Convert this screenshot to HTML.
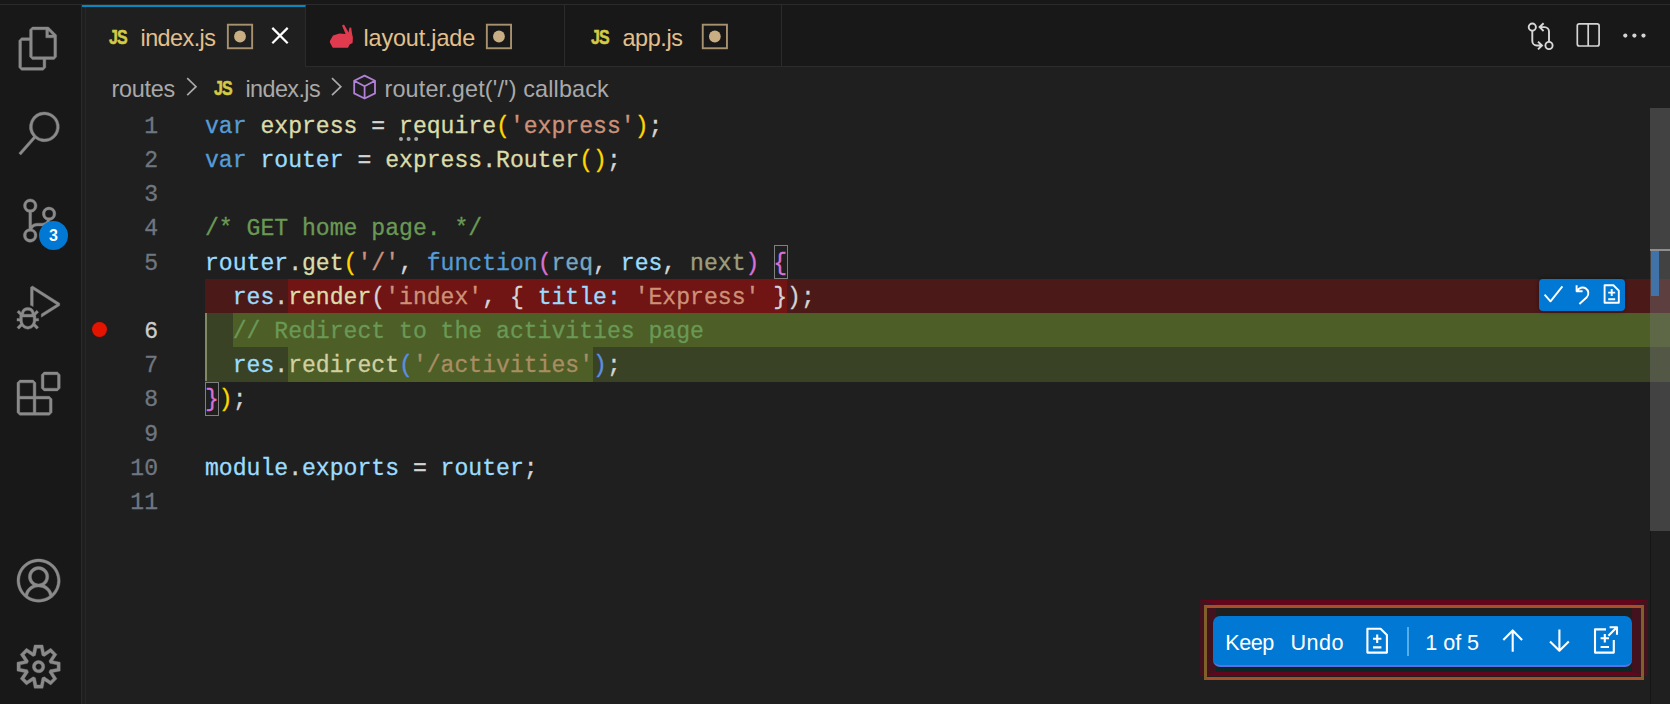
<!DOCTYPE html>
<html lang="en">
<head>
<meta charset="utf-8">
<title>index.js - Visual Studio Code</title>
<style>
*{box-sizing:border-box;margin:0;padding:0}
html,body{width:1670px;height:704px;overflow:hidden;background:#1f1f1f}
body{position:relative;font-family:"Liberation Sans",sans-serif;color:#ccc}
.abs{position:absolute}
#activity{left:0;top:0;width:82px;height:704px;background:#181818;border-right:1px solid #2b2b2b}
#activity svg{position:absolute;overflow:visible}
#topstrip{left:0;top:0;width:1670px;height:5px;background:#181818;border-bottom:1px solid #2b2b2b}
#tabs{left:82px;top:5px;width:1588px;height:62px;background:#181818;border-bottom:1px solid #2b2b2b}
.tab{position:absolute;top:0;height:62px;border-right:1px solid #2b2b2b;border-bottom:1px solid #2b2b2b}
.tab.active{background:#1f1f1f;border-top:2px solid #0888bf;border-bottom:none}
.tablabel{position:absolute;font-size:23.4px;line-height:28px;color:#e2c08d;white-space:nowrap}
.jsicon{position:absolute;font-size:19.5px;line-height:20px;font-weight:bold;color:#d2cb45;letter-spacing:-1px;transform-origin:0 0;transform:scaleX(.82);-webkit-text-stroke:.5px #d2cb45}
#crumbs{left:82px;top:67px;width:1588px;height:41px;background:#1f1f1f;font-size:23.4px;color:#a9a9a9}
.crumb{position:absolute;top:75px;font-size:23.4px;line-height:28px;white-space:nowrap;color:#a9a9a9}
#editor{left:82px;top:108px;width:1588px;height:596px;background:#1f1f1f;font-family:"Liberation Mono",monospace;font-size:23.1px}
.ln{-webkit-text-stroke:.3px;margin-top:1.8px;position:absolute;left:0;width:76px;text-align:right;color:#6e7681;height:34.2px;line-height:34.2px}
.cl{-webkit-text-stroke:.3px;margin-top:1.8px;position:absolute;left:123px;height:34.2px;line-height:34.2px;white-space:pre;color:#d4d4d4}
.bg{position:absolute}
.k{color:#569cd6}.v{color:#9cdcfe}.f{color:#dcdcaa}.s{color:#ce9178}.c{color:#6a9955}
.b1{color:#ffd700}.b2{color:#da70d6}.b3{color:#179fff}.dimv{color:#9cdcfe;opacity:.72}.dimf{color:#dcdcaa;opacity:.67}
.box{position:absolute;border:1px solid #808080;width:14.4px;height:34.2px}
.bt{position:absolute;top:629.2px;font-size:21.6px;line-height:28px;color:#fff;white-space:nowrap}
#scroll{left:1650px;top:108px;width:20px;height:423px;background:rgba(121,121,121,.4)}
</style>
</head>
<body>
<div id="activity" class="abs">
  <svg style="left:17.4px;top:26.7px" width="43.2" height="43.2" viewBox="0 0 24 24" fill="#8a8a8a" stroke="#8a8a8a" stroke-width=".22"><path d="M17.5 0h-9L7 1.5V6H2.5L1 7.5v15.07L2.5 24h12.07L16 22.57V18h4.7l1.3-1.43V4.5L17.5 0zm0 2.12l2.38 2.38H17.5V2.12zm-3 20.38h-12v-15H7v9.07L8.5 18h6v4.5zm6-6h-12v-15H16V6h4.5v10.5z"/></svg>
  <svg style="left:17.4px;top:112.4px" width="43.2" height="43.2" viewBox="0 0 24 24" fill="#8a8a8a" stroke="#8a8a8a" stroke-width=".22"><path d="M15.25 0a8.25 8.25 0 0 0-6.18 13.72L1 22.88l1.12 1 8.05-9.12A8.251 8.251 0 1 0 15.25.01V0zm0 15a6.75 6.75 0 1 1 0-13.5 6.75 6.75 0 0 1 0 13.5z"/></svg>
  <svg style="left:18px;top:198.8px" width="43.2" height="43.2" viewBox="0 0 24 24" fill="#8a8a8a" stroke="#8a8a8a" stroke-width=".22"><path d="M21.007 8.222A3.738 3.738 0 0 0 15.045 5.2a3.737 3.737 0 0 0 1.156 6.583 2.988 2.988 0 0 1-2.668 1.67h-2.99a4.456 4.456 0 0 0-2.989 1.165V7.4a3.737 3.737 0 1 0-1.494 0v9.117a3.776 3.776 0 1 0 1.816.099 2.99 2.99 0 0 1 2.668-1.667h2.99a4.484 4.484 0 0 0 4.223-3.039 3.736 3.736 0 0 0 3.25-3.687zM4.565 3.738a2.242 2.242 0 1 1 4.484 0 2.242 2.242 0 0 1-4.484 0zm4.484 16.441a2.242 2.242 0 1 1-4.484 0 2.242 2.242 0 0 1 4.484 0zm8.221-9.715a2.242 2.242 0 1 1 0-4.485 2.242 2.242 0 0 1 0 4.485z"/></svg>
  <div class="abs" style="left:39px;top:221px;width:29px;height:29px;border-radius:50%;background:#0078d4;color:#fff;font-size:16px;font-weight:bold;text-align:center;line-height:29px">3</div>
  <svg style="left:17.4px;top:286px" width="43.2" height="43.2" viewBox="0 0 24 24" fill="#8a8a8a" stroke="#8a8a8a" stroke-width=".22"><path d="M10.94 13.5l-1.32 1.32a3.73 3.73 0 0 0-7.24 0L1.06 13.5 0 14.56l1.72 1.72-.22.22V18H0v1.5h1.5v.08c.077.489.214.966.41 1.42L0 22.94 1.06 24l1.65-1.65A4.308 4.308 0 0 0 6 24a4.31 4.31 0 0 0 3.29-1.65L10.94 24 12 22.94 10.09 21c.198-.464.336-.951.41-1.45v-.1H12V18h-1.5v-1.5l-.22-.22L12 14.56l-1.06-1.06zM6 13.5a2.25 2.25 0 0 1 2.25 2.25h-4.5A2.25 2.25 0 0 1 6 13.5zm3 6a3.33 3.33 0 0 1-3 3 3.33 3.33 0 0 1-3-3v-2.25h6v2.25zm14.76-9.9v1.26L13.5 17.37V15.6l8.5-5.37L9 2v9.46a5.07 5.07 0 0 0-1.5-.72V.63L8.64 0l15.12 9.6z"/></svg>
  <svg style="left:17.4px;top:372px" width="43.2" height="43.2" viewBox="0 0 24 24" fill="#8a8a8a" stroke="#8a8a8a" stroke-width=".22"><path d="M13.5 1.5L15 0h7.5L24 1.5V9l-1.5 1.5H15L13.5 9V1.5zm1.5 0V9h7.5V1.5H15zM0 15V6l1.5-1.5H9L10.5 6v7.5H18l1.5 1.5v7.5L18 24H1.5L0 22.5V15zm9-1.5V6H1.5v7.5H9zM9 15H1.5v7.5H9V15zm1.5 7.5H18V15h-7.5v7.5z"/></svg>
  <svg style="left:17.4px;top:558.6px" width="43.2" height="43.2" viewBox="0 0 16 16" fill="#8a8a8a" stroke="#8a8a8a" stroke-width=".15"><path d="M16 7.992C16 3.58 12.416 0 8 0S0 3.58 0 7.992c0 2.43 1.104 4.62 2.832 6.09.016.016.032.016.032.032.144.112.288.224.448.336.08.048.144.111.224.175A7.98 7.98 0 0 0 8.016 16a7.98 7.98 0 0 0 4.48-1.375c.08-.048.144-.111.224-.16.144-.111.304-.223.448-.335.016-.016.032-.016.032-.032 1.696-1.487 2.8-3.676 2.8-6.106zm-8 7.001c-1.504 0-2.88-.48-4.016-1.279.016-.128.048-.255.08-.383a4.17 4.17 0 0 1 .416-.991c.176-.304.384-.576.64-.816.24-.24.528-.463.816-.639.304-.176.624-.304.976-.4A4.15 4.15 0 0 1 8 10.342a4.185 4.185 0 0 1 2.928 1.166c.368.368.656.8.864 1.295.112.288.192.592.24.911A7.03 7.03 0 0 1 8 14.993zm-2.448-7.4a2.49 2.49 0 0 1-.208-1.024c0-.351.064-.703.208-1.023.144-.32.336-.607.576-.847.24-.24.528-.431.848-.575.32-.144.672-.208 1.024-.208.368 0 .704.064 1.024.208.32.144.608.336.848.575.24.24.432.528.576.847.144.32.208.672.208 1.023 0 .368-.064.704-.208 1.023a2.84 2.84 0 0 1-.576.848 2.84 2.84 0 0 1-.848.575 2.715 2.715 0 0 1-2.064 0 2.84 2.84 0 0 1-.848-.575 2.526 2.526 0 0 1-.56-.848zm7.424 5.306c0-.032-.016-.048-.016-.08a5.22 5.22 0 0 0-.688-1.406 4.883 4.883 0 0 0-1.088-1.135 5.207 5.207 0 0 0-1.04-.608 2.82 2.82 0 0 0 .464-.383 4.2 4.2 0 0 0 .624-.784 3.624 3.624 0 0 0 .528-1.934 3.71 3.71 0 0 0-.288-1.47 3.799 3.799 0 0 0-.816-1.199 3.845 3.845 0 0 0-1.2-.8 3.72 3.72 0 0 0-1.472-.287 3.72 3.72 0 0 0-1.472.288 3.631 3.631 0 0 0-1.2.815 3.84 3.84 0 0 0-.8 1.199 3.71 3.71 0 0 0-.288 1.47c0 .352.048.688.144 1.007.096.336.224.64.4.927.16.288.384.544.624.784.144.144.304.271.48.383a5.12 5.12 0 0 0-1.04.624c-.416.32-.784.703-1.088 1.119a4.999 4.999 0 0 0-.688 1.406c-.16.032-.16.064-.16.08C1.776 11.636.992 9.91.992 7.992.992 4.14 4.144.991 8 .991s7.008 3.149 7.008 7.001a6.96 6.96 0 0 1-2.032 4.907z"/></svg>
  <svg style="left:17.4px;top:644.8px" width="43.2" height="43.2" viewBox="0 0 24 24" fill="#8a8a8a" stroke="#8a8a8a" stroke-width=".22"><path fill-rule="evenodd" d="M19.85 8.75l4.15.83v4.84l-4.15.83 2.35 3.52-3.43 3.43-3.52-2.35-.83 4.15H9.58l-.83-4.15-3.52 2.35-3.43-3.43 2.35-3.52L0 14.42V9.58l4.15-.83L1.8 5.23 5.23 1.8l3.52 2.35L9.58 0h4.84l.83 4.15 3.52-2.35 3.43 3.43-2.35 3.52zm-1.57 5.07l4-.81v-2l-4-.81-.54-1.3 2.29-3.43-1.43-1.43-3.43 2.29-1.3-.54-.81-4h-2l-.81 4-1.3.54-3.43-2.29-1.43 1.43L6.38 8.9l-.54 1.3-4 .81v2l4 .81.54 1.3-2.29 3.43 1.43 1.43 3.43-2.29 1.3.54.81 4h2l.81-4 1.3-.54 3.43 2.29 1.43-1.43-2.29-3.43.54-1.3zm-8.186-4.672A3.43 3.43 0 0 1 12 8.57 3.44 3.44 0 0 1 15.43 12a3.43 3.43 0 1 1-5.336-2.852zm.956 4.274c.281.188.612.288.95.288A1.7 1.7 0 0 0 13.71 12a1.71 1.71 0 1 0-2.66 1.422z"/></svg>
</div>
<div id="topstrip" class="abs"></div>
<div id="tabs" class="abs">
  <div class="tab active" style="left:0;width:224px"></div>
  <div class="tab" style="left:224px;width:259px"></div>
  <div class="tab" style="left:483px;width:217px"></div>
</div>
<span class="jsicon" style="left:109px;top:26.5px">JS</span>
<span class="tablabel" style="left:140.5px;top:24px;letter-spacing:-.55px">index.js</span>
<span class="tablabel" style="left:363.5px;top:24px;letter-spacing:-.15px">layout.jade</span>
<span class="jsicon" style="left:591px;top:26.5px">JS</span>
<span class="tablabel" style="left:622.5px;top:24px;letter-spacing:-.4px">app.js</span>
<div id="crumbs" class="abs"></div>
<span class="crumb" style="left:111.5px;letter-spacing:-.25px">routes</span>
<span class="jsicon" style="left:214px;top:77.5px">JS</span>
<span class="crumb" style="left:245.5px;letter-spacing:-.6px">index.js</span>
<span class="crumb" style="left:384.5px;letter-spacing:.15px">router.get('/') callback</span>
<div id="editor" class="abs">
  <div class="bg" style="left:123px;top:171px;width:1465px;height:34.2px;background:#4c1919"></div>
  <div class="bg" style="left:206px;top:171px;width:499px;height:34.2px;background:#701414"></div>
  <div class="bg" style="left:123px;top:205.2px;width:1465px;height:68.4px;background:#394225"></div>
  <div class="bg" style="left:151px;top:205.2px;width:1437px;height:34.2px;background:#4d5e27"></div>
  <div class="bg" style="left:206px;top:239.4px;width:305px;height:34.2px;background:#4d5e27"></div>

  <div class="ln" style="top:0">1</div>
  <div class="ln" style="top:34.2px">2</div>
  <div class="ln" style="top:68.4px">3</div>
  <div class="ln" style="top:102.6px">4</div>
  <div class="ln" style="top:136.8px">5</div>
  <div class="ln" style="top:205.2px;color:#ccc">6</div>
  <div class="ln" style="top:239.4px">7</div>
  <div class="ln" style="top:273.6px">8</div>
  <div class="ln" style="top:307.8px">9</div>
  <div class="ln" style="top:342px">10</div>
  <div class="ln" style="top:376.2px">11</div>

  <div class="cl" style="top:0"><span class="k">var</span> <span class="f">express</span> = <span class="f">require</span><span class="b1">(</span><span class="s">'express'</span><span class="b1">)</span>;</div>
  <div class="cl" style="top:34.2px"><span class="k">var</span> <span class="v">router</span> = <span class="f">express</span>.<span class="f">Router</span><span class="b1">()</span>;</div>
  <div class="cl" style="top:102.6px"><span class="c">/* GET home page. */</span></div>
  <div class="cl" style="top:136.8px"><span class="v">router</span>.<span class="f">get</span><span class="b1">(</span><span class="s">'/'</span>, <span class="k">function</span><span class="b2">(</span><span class="dimv">req</span>, <span class="v">res</span>, <span class="dimf">next</span><span class="b2">)</span> <span class="b2">{</span></div>
  <div class="cl" style="top:171px">  <span class="v">res</span>.<span class="f">render</span>(<span class="s">'index'</span>, { <span class="v">title</span><span class="v">:</span> <span class="s">'Express'</span> });</div>
  <div class="cl" style="top:205.2px">  <span class="c">// Redirect to the activities page</span></div>
  <div class="cl" style="top:239.4px">  <span class="v">res</span>.<span class="f" style="color:#d0d0a0">redirect</span><span style="color:#5d8fe0">(</span><span style="color:#a88e62">'/activities'</span><span style="color:#5d8fe0">)</span>;</div>
  <div class="cl" style="top:273.6px"><span class="b2">}</span><span class="b1">)</span>;</div>
  <div class="cl" style="top:342px"><span class="v">module</span>.<span class="v">exports</span> = <span class="v">router</span>;</div>
</div>
<div id="scroll" class="abs"></div>
<div class="abs" style="left:1650px;top:531px;width:1px;height:173px;background:#151515"></div>
<div class="abs" style="left:1650px;top:248.5px;width:20px;height:2.5px;background:#8f8f8f"></div>
<div class="abs" style="left:1651px;top:251px;width:7.6px;height:45px;background:#4273a8"></div>
<div class="abs" style="left:205px;top:312.6px;width:1.6px;height:68.6px;background:#7f8a64"></div>
<div class="box" style="left:773.8px;top:244.8px"></div>
<div class="box" style="left:204.8px;top:381.6px"></div>
<div class="abs" style="left:85px;top:7px;width:1px;height:697px;background:#262626"></div>
<div class="abs" style="left:91.9px;top:321.9px;width:15.4px;height:15.4px;border-radius:50%;background:#e51400"></div>
<div class="abs" style="left:398.8px;top:136.9px;width:3.8px;height:3.8px;border-radius:50%;background:#a8a8a8;box-shadow:7.6px 0 0 #a8a8a8,15.2px 0 0 #a8a8a8"></div>

<div class="abs" style="left:1539px;top:279px;width:86px;height:32px;border-radius:4px;background:#0078d4;box-shadow:0 0 4px rgba(0,0,0,.45)"></div>

<div class="abs" style="left:1200px;top:600px;width:448px;height:76px;border-style:solid;border-color:#63051b #42131e;border-width:5px 16px 4.5px 16px"></div>
<div class="abs" style="left:1204px;top:605px;width:440px;height:74.5px;border-style:solid;border-width:3px;border-color:#a55028 #806029"></div>
<div class="abs" style="left:1216px;top:667px;width:416px;height:5px;background:#0a2926"></div>
<div id="bar" class="abs" style="left:1213px;top:615.7px;width:419px;height:51px;border-radius:7px;background:#0078d4;border-bottom:2px solid #5f6fe0"></div>
<span class="bt" style="left:1225.2px;letter-spacing:-.43px">Keep</span>
<span class="bt" style="left:1290.5px;letter-spacing:.47px">Undo</span>
<span class="bt" style="left:1425.3px;letter-spacing:-.06px">1 of 5</span>
<div class="abs" style="left:1407.4px;top:627px;width:1.6px;height:28.6px;background:#55adea"></div>

<svg class="abs" style="left:0;top:0" width="1670" height="704" viewBox="0 0 1670 704" fill="none" stroke-linecap="butt" stroke-linejoin="miter">
  <!-- pinned/modified markers -->
  <g stroke="#a8916f" stroke-width="1.9">
    <rect x="227.85" y="24.7" width="24.3" height="23.55"/>
    <rect x="486.85" y="24.7" width="24.2" height="23.55"/>
    <rect x="702.75" y="24.7" width="24.2" height="23.55"/>
  </g>
  <g fill="#c9ad83"><circle cx="240" cy="36.5" r="5.9"/><circle cx="498.95" cy="36.5" r="5.9"/><circle cx="714.85" cy="36.5" r="5.9"/></g>
  <!-- close -->
  <path d="M272.3 27.9L287.7 43.3M287.7 27.9L272.3 43.3" stroke="#fff" stroke-width="2.2"/>
  <!-- jade rabbit -->
  <path d="M329.9 41L333 35.5L339.5 33.4L345.6 34L342 25.6L344 24.6L348.6 32.6L349.4 27.8L351.2 27.6L352 33.6L352.9 37.5L352.6 43L349.6 44.6L348 47.8L332.8 47.8L329.9 42.5Z" fill="#e03a4e"/>
  <!-- chevrons -->
  <path d="M187.2 78.2L196 86.7L187.2 95.2" stroke="#a9a9a9" stroke-width="1.7"/>
  <path d="M332 78.2L340.8 86.7L332 95.2" stroke="#a9a9a9" stroke-width="1.7"/>
  <!-- cube -->
  <path d="M364.6 75.6L375 80.8V93.4L364.6 98.5L354.2 93.4V80.8ZM354.2 80.8L364.6 86.3L375 80.8M364.6 86.3V98.5" stroke="#b180d7" stroke-width="1.8" stroke-linejoin="round"/>
  <!-- compare -->
  <g stroke="#d8d8d8" stroke-width="1.9">
    <circle cx="1532.3" cy="27.1" r="3.6"/>
    <circle cx="1549" cy="45.5" r="3.6"/>
    <path d="M1532.3 30.8V41a4.5 4.5 0 0 0 4.5 4.5H1541.5M1538 41.6L1542 45.5L1538 49.4"/>
    <path d="M1549 41.8V31.6a4.5 4.5 0 0 0 -4.5 -4.5H1540M1543.6 23.2L1539.6 27.1L1543.6 31"/>
  </g>
  <!-- split -->
  <g stroke="#d4d4d4" stroke-width="1.7">
    <rect x="1577.3" y="23.8" width="21.8" height="22.2" rx="2"/>
    <path d="M1588.2 23.8V46"/>
  </g>
  <g fill="#d4d4d4"><circle cx="1625.3" cy="35.6" r="2.1"/><circle cx="1634.4" cy="35.6" r="2.1"/><circle cx="1643.5" cy="35.6" r="2.1"/></g>
  <!-- small toolbar icons -->
  <g stroke="#fff" stroke-width="1.9" stroke-linejoin="round">
    <path d="M1544.6 294.6L1550.5 301.3L1562.4 286.3"/>
    <path d="M1576.6 285.2V291.2H1582.6M1577.2 291A5.8 5.8 0 1 1 1586.8 297.2L1579.4 304"/>
    <path d="M1604.6 285.3H1613.4L1618.8 290.6V302.8H1604.6Z" stroke-linejoin="round"/>
    <path d="M1608.2 292.6H1615.2M1611.7 289.1V296.1M1608.2 299.3H1615.2"/>
  </g>
  <!-- bottom bar icons -->
  <g stroke="#fff" stroke-width="2.1" stroke-linejoin="round">
    <path d="M1367.4 628.7H1380.6L1386.9 635V652.6H1367.4Z" stroke-linejoin="round"/>
    <path d="M1373 638.8H1381.4M1377.2 634.6V643M1373 647.4H1381.4"/>
    <path d="M1512.7 651.7V630.4M1503.3 640L1512.7 630.4L1522.1 640"/>
    <path d="M1559.4 629.4V650.7M1550 641.4L1559.4 650.7L1568.8 641.4"/>
    <path d="M1606 629.4H1595V652.6H1613.8V640" stroke-linejoin="round"/>
    <path d="M1608.4 635.8L1616.6 627.6M1609.6 627.3H1617V634.8"/>
    <path d="M1600.6 638.2H1609M1604.8 634V642.4M1600.6 647H1609"/>
  </g>
</svg>
</body>
</html>
